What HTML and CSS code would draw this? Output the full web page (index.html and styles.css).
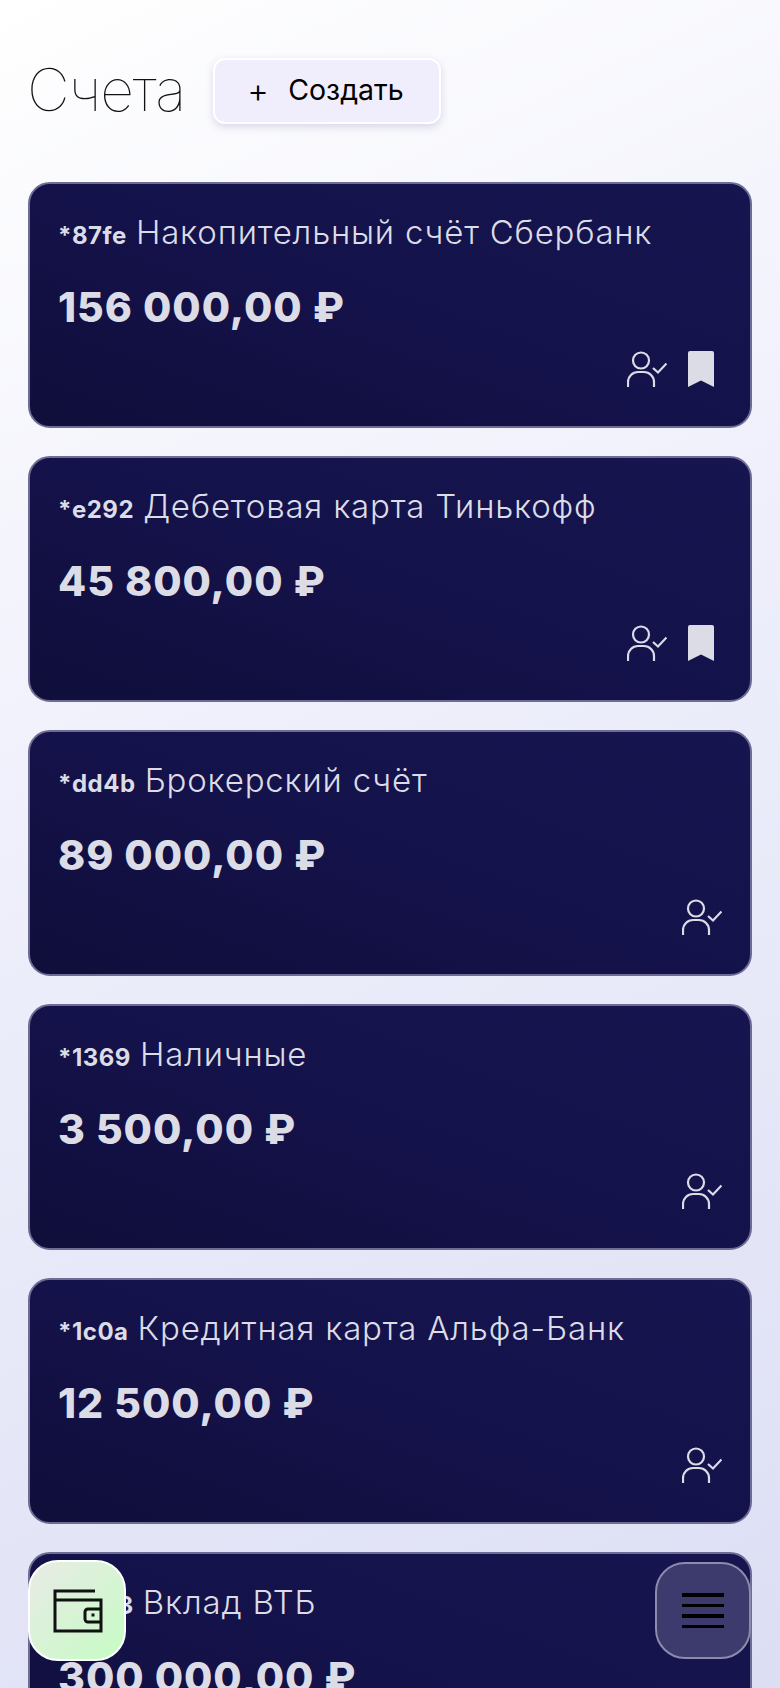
FILE: index.html
```html
<!DOCTYPE html>
<html lang="ru">
<head>
  <meta charset="UTF-8">
  <title>Счета</title>
  <link rel="stylesheet" href="styles.css">
</head>
<body>
  <svg class="sprite" width="0" height="0">
    <symbol id="user-check" viewBox="0 0 40 36">
      <circle cx="14" cy="9.500" r="8" fill="none" stroke="currentColor" stroke-width="2.200"/>
      <path d="M1 36v-5a10 10 0 0 1 10-10h6a10 10 0 0 1 10 10v5" fill="none" stroke="currentColor" stroke-width="2.200"/>
      <path d="M26 17l5 4.500 8.500-9" fill="none" stroke="currentColor" stroke-width="2.200"/>
    </symbol>
    <symbol id="bookmark" viewBox="0 0 26 36">
      <path d="M0 2a2 2 0 0 1 2-2h22a2 2 0 0 1 2 2v34l-13-6.500L0 36z" fill="currentColor"/>
    </symbol>
  </svg>

  <header class="top">
    <h1>Счета</h1>
    <button class="create"><span class="plus">+</span>Создать</button>
  </header>

  <main class="accounts">
    <section class="card">
      <p class="name"><b>*87fe</b> Накопительный счёт Сбербанк</p>
      <p class="sum">156 000,00 ₽</p>
      <div class="icons">
        <svg class="ico-user"><use href="#user-check"/></svg>
        <svg class="ico-mark"><use href="#bookmark"/></svg>
      </div>
    </section>
    <section class="card">
      <p class="name"><b>*e292</b> Дебетовая карта Тинькофф</p>
      <p class="sum">45 800,00 ₽</p>
      <div class="icons">
        <svg class="ico-user"><use href="#user-check"/></svg>
        <svg class="ico-mark"><use href="#bookmark"/></svg>
      </div>
    </section>
    <section class="card">
      <p class="name"><b>*dd4b</b> Брокерский счёт</p>
      <p class="sum">89 000,00 ₽</p>
      <div class="icons">
        <svg class="ico-user"><use href="#user-check"/></svg>
      </div>
    </section>
    <section class="card">
      <p class="name"><b>*1369</b> Наличные</p>
      <p class="sum">3 500,00 ₽</p>
      <div class="icons">
        <svg class="ico-user"><use href="#user-check"/></svg>
      </div>
    </section>
    <section class="card">
      <p class="name"><b>*1c0a</b> Кредитная карта Альфа-Банк</p>
      <p class="sum">12 500,00 ₽</p>
      <div class="icons">
        <svg class="ico-user"><use href="#user-check"/></svg>
      </div>
    </section>
    <section class="card">
      <p class="name"><b>*c0a3</b> Вклад ВТБ</p>
      <p class="sum">300 000,00 ₽</p>
      <div class="icons">
        <svg class="ico-user"><use href="#user-check"/></svg>
      </div>
    </section>
  </main>

  <button class="fab fab-wallet">
    <svg width="50" height="44" viewBox="0 0 50 44" fill="none" stroke="#111" stroke-width="3">
      <path d="M42 2H2v40h46V11H2"/>
      <path d="M48 20H35a3 3 0 0 0-3 3v7a3 3 0 0 0 3 3h13"/>
      <rect x="38.500" y="24.500" width="3" height="3" fill="#111" stroke="none"/>
    </svg>
  </button>
  <button class="fab fab-menu">
    <span></span><span></span><span></span><span></span>
  </button>
</body>
</html>
```

FILE: styles.css
```css
html, body {
  margin: 0;
  height: 1688px;
  overflow: hidden;
}
body {
  font-family: Inter, "Noto Sans", sans-serif;
  background: linear-gradient(155deg, #ffffff 0%, #eff0fb 40%, #dcdef4 100%);
  padding: 0 28px;
  box-sizing: border-box;
}
.sprite {
  position: absolute;
}
.top {
  display: flex;
  align-items: center;
  gap: 28px;
  padding-top: 58px;
  height: 66px;
  margin-bottom: 58px;
}
h1 {
  margin: 0 0 3px -1px;
  font-size: 59px;
  font-weight: 100;
  color: #111;
  letter-spacing: -1.2px;
}
.create {
  display: flex;
  align-items: center;
  width: 228px;
  height: 66px;
  padding: 0 30px 3px 32px;
  border: 2px solid #fff;
  border-radius: 12px;
  background: #f0edfd;
  box-shadow: 0 3px 8px rgba(60, 60, 120, 0.18);
  font: 400 28.500px Inter, sans-serif;
  color: #000;
  box-sizing: border-box;
}
.plus {
  font-size: 33px;
  width: 41px;
  text-align: left;
  font-weight: 300;
}
.accounts {
  display: flex;
  flex-direction: column;
  gap: 28px;
}
.card {
  position: relative;
  height: 246px;
  box-sizing: border-box;
  padding: 28px 28px 0;
  border: 2px solid #6e6c94;
  border-radius: 22px;
  background: linear-gradient(200deg, #17154f 0%, #14124a 50%, #100e3a 100%);
  color: #dcdce6;
}
.name {
  margin: 0;
  font-size: 33px;
  font-weight: 300;
  line-height: 40px;
  letter-spacing: 0.8px;
  white-space: nowrap;
}
.name b {
  font-size: 24px;
  font-weight: 700;
  letter-spacing: 0.5px;
  margin-right: -1px;
}
.sum {
  margin: 26px 0 0;
  font-size: 41px;
  font-weight: 800;
  line-height: 50px;
  letter-spacing: 1px;
}
.icons {
  position: absolute;
  right: 28px;
  bottom: 39px;
  display: flex;
  gap: 21px;
  align-items: center;
}
.ico-user {
  width: 40px;
  height: 36px;
}
.ico-mark {
  width: 26px;
  height: 36px;
  margin-right: 8px;
}
.fab {
  position: fixed;
  top: 1560px;
  width: 98px;
  height: 101px;
  display: flex;
  flex-direction: column;
  align-items: center;
  justify-content: center;
  border-radius: 30px;
  box-sizing: border-box;
  padding: 0;
}
.fab-wallet {
  left: 28px;
  padding-left: 2px;
  border: 2px solid #fff;
  background: linear-gradient(135deg, #e9ebe6 0%, #c6fcc4 100%);
}
.fab-menu {
  left: 655px;
  top: 1562px;
  width: 96px;
  height: 97px;
  gap: 7px;
  border: 2px solid #8d8bac;
  background: #3d3a6e;
}
.fab-menu span {
  display: block;
  width: 42px;
  height: 3.500px;
  background: #000;
}
```
